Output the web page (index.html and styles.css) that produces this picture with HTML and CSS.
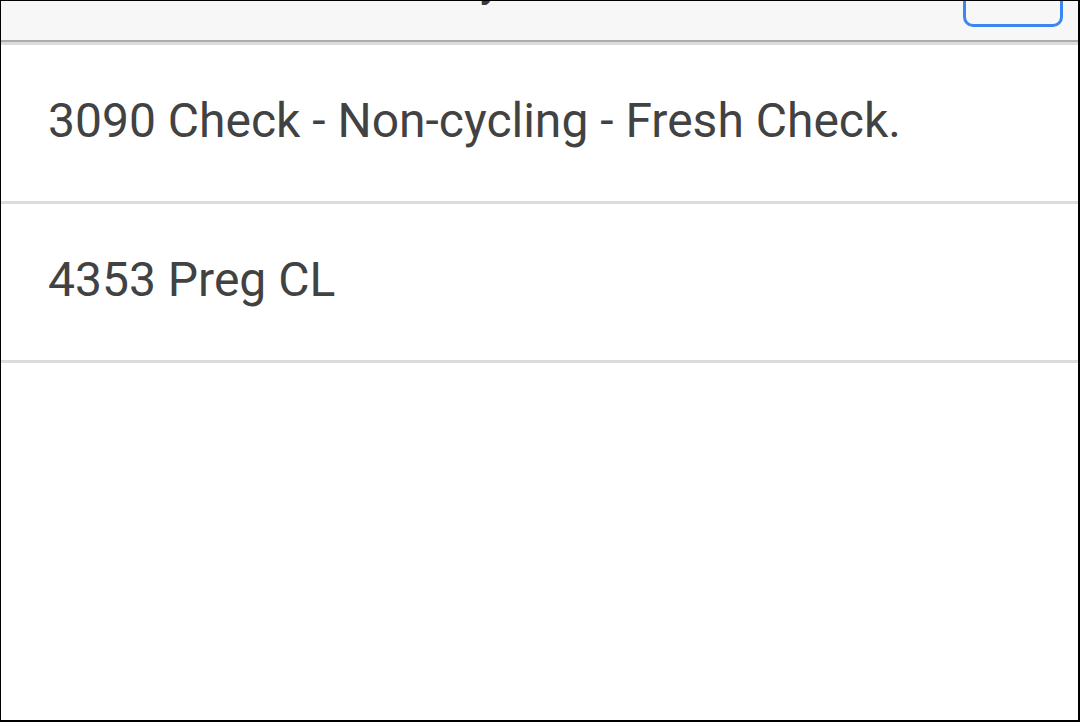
FILE: index.html
```html
<!DOCTYPE html>
<html>
<head>
<meta charset="utf-8">
<link rel="stylesheet" href="styles.css">
</head>
<body>
<div class="frame">
  <header class="topbar">
    <div class="spacer"></div>
    <h1 class="title">Daily Checks</h1>
    <button class="action" type="button"></button>
  </header>
  <div class="shade"></div>
  <ul class="list">
    <li class="row">3090 Check - Non-cycling - Fresh Check.</li>
    <li class="row">4353 Preg CL</li>
  </ul>
</div>
</body>
</html>
```
FILE: styles.css
```css
html, body {
  margin: 0;
  padding: 0;
  background: #ffffff;
}
.frame {
  width: 1080px;
  height: 722px;
  box-sizing: border-box;
  border-top: 1px solid #000;
  border-left: 1px solid #000;
  border-right: 2px solid #000;
  border-bottom: 2px solid #000;
  overflow: hidden;
  font-family: Roboto, "Liberation Sans", sans-serif;
  background: #fff;
}
.topbar {
  height: 39px;
  background: #f7f7f7;
  border-bottom: 2px solid #acacac;
  display: grid;
  grid-template-columns: 1fr auto 1fr;
  grid-template-rows: 39px;
  align-items: end;
  overflow: hidden;
}
.title {
  margin: 0 26px 36px 0;
  font-size: 40px;
  font-weight: 500;
  color: #3a3a3a;
  line-height: 40px;
  white-space: nowrap;
}
.action {
  justify-self: end;
  align-self: end;
  width: 100px;
  height: 50px;
  margin: 0 15px 13px 0;
  border: 3px solid #3a86f4;
  border-radius: 10px;
  background: transparent;
  padding: 0;
}
.shade {
  height: 3px;
  background: #dcdcdc;
}
.list {
  list-style: none;
  margin: 0;
  padding: 0;
}
.row {
  height: 150px;
  padding-bottom: 6px;
  display: flex;
  align-items: center;
  padding-left: 47px;
  border-bottom: 3px solid #dcdcdc;
  font-size: 48px;
  color: #424242;
  box-sizing: content-box;
}
```
